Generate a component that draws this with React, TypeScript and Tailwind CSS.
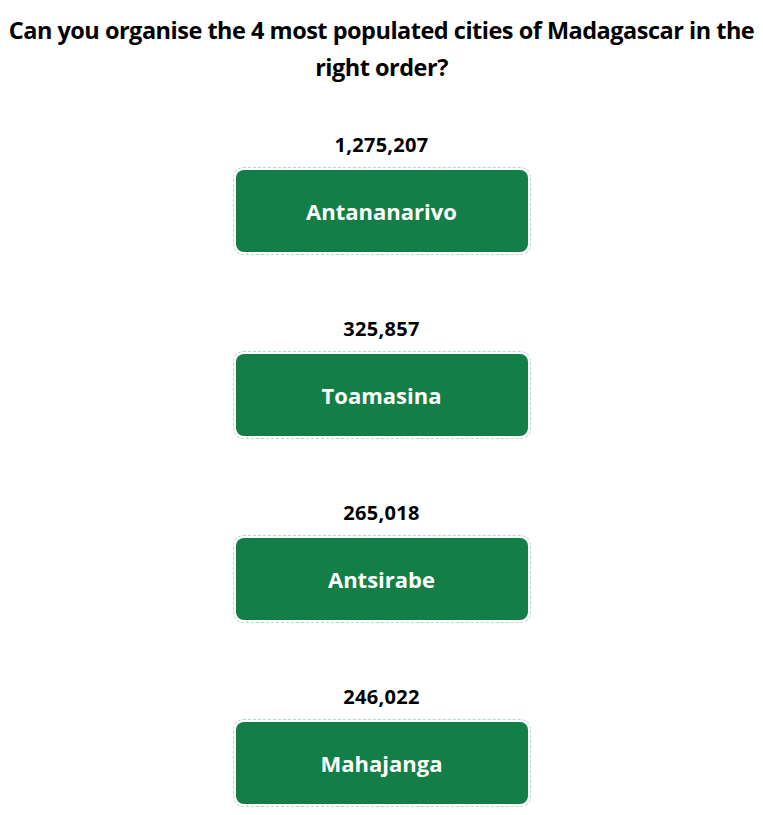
const cities = [
  { name: "Antananarivo", population: "1,275,207" },
  { name: "Toamasina", population: "325,857" },
  { name: "Antsirabe", population: "265,018" },
  { name: "Mahajanga", population: "246,022" },
];

function CityCard({ name, population }: { name: string; population: string }) {
  return (
    <div className="flex flex-col items-center">
      <div className="text-[20px] font-bold leading-[24px] tracking-[0.3px] text-black">{population}</div>
      <div className="mt-[10px] rounded-[10px] border border-dashed border-[#b9d6c6] p-[2px]">
        <div className="flex h-[82px] w-[292px] items-center justify-center rounded-[8px] bg-[#137f46] text-[22px] font-bold text-white">
          {name}
        </div>
      </div>
    </div>
  );
}

export default function App() {
  return (
    <div
      className="min-h-screen bg-white pt-[12px] text-center"
      style={{ fontFamily: '"Open Sans", "Noto Sans", sans-serif' }}
    >
      <h1 className="mx-auto px-[4px] text-[23.5px] font-bold leading-[37px] tracking-[-0.5px] text-black">
        Can you organise the 4 most populated cities of Madagascar in the right order?
      </h1>
      <div className="mt-[47px] flex flex-col gap-[62px]">
        {cities.map((c) => (
          <CityCard key={c.name} name={c.name} population={c.population} />
        ))}
      </div>
    </div>
  );
}
